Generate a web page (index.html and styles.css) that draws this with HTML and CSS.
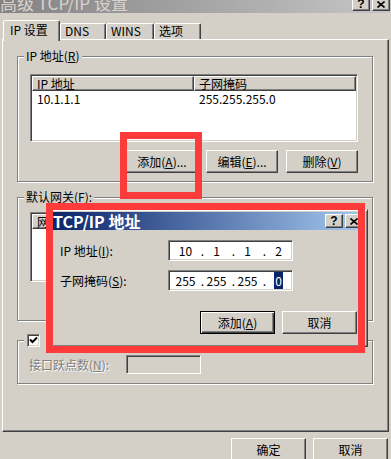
FILE: index.html
```html
<!DOCTYPE html>
<html lang="zh-CN">
<head>
    <meta charset="UTF-8">
    <meta name="viewport" content="width=device-width, initial-scale=1.0">
    <title>高级 TCP/IP 设置</title>
    <link rel="stylesheet" href="styles.css">
</head>
<body>
    <div class="window">
        <div class="titlebar">
            <span class="title">高级 TCP/IP 设置</span>
            <div class="caption-btns">
                <span class="cap-btn">?</span>
                <span class="cap-btn">
                    <svg width="8" height="7" viewBox="0 0 8 7"><path d="M0.5 0.5 L7.5 6.5 M7.5 0.5 L0.5 6.5" stroke="#000" stroke-width="1.6" fill="none"/></svg>
                </span>
            </div>
        </div>

        <div class="tabs">
            <div class="tab active">IP 设置</div>
            <div class="tab tab-dns">DNS</div>
            <div class="tab tab-wins">WINS</div>
            <div class="tab tab-opt">选项</div>
        </div>

        <div class="panel">
            <fieldset class="group group-ip">
                <legend>IP 地址(<u>R</u>)</legend>
                <div class="list list-ip">
                    <div class="list-head">
                        <span class="col col-1">IP 地址</span>
                        <span class="col col-2">子网掩码</span>
                    </div>
                    <div class="list-row">
                        <span class="col col-1">10.1.1.1</span>
                        <span class="col col-2">255.255.255.0</span>
                    </div>
                </div>
                <div class="btn-row">
                    <button class="btn">添加(<u>A</u>)...</button>
                    <button class="btn">编辑(<u>E</u>)...</button>
                    <button class="btn">删除(<u>V</u>)</button>
                </div>
            </fieldset>

            <fieldset class="group group-gw">
                <legend>默认网关(<u>F</u>):</legend>
                <div class="list list-gw">
                    <div class="list-head">
                        <span class="col col-1">网关</span>
                        <span class="col col-2">跃点数</span>
                    </div>
                </div>
                <div class="btn-row">
                    <button class="btn">添加(<u>D</u>)...</button>
                    <button class="btn">编辑(<u>T</u>)...</button>
                    <button class="btn">删除(<u>M</u>)</button>
                </div>
            </fieldset>

            <fieldset class="group group-metric">
                <legend>
                    <span class="checkbox">
                        <svg width="9" height="9" viewBox="0 0 9 9"><path d="M1 3.5 L3.5 6 L8 1.5" stroke="#000" stroke-width="2" fill="none"/></svg>
                    </span>
                    <span class="check-label">自动跃点计数(<u>U</u>)</span>
                </legend>
                <div class="metric-row">
                    <span class="disabled-label">接口跃点数(<u>N</u>):</span>
                    <span class="textbox disabled"></span>
                </div>
            </fieldset>
        </div>

        <div class="footer">
            <button class="btn">确定</button>
            <button class="btn">取消</button>
        </div>

        <!-- popup dialog on top -->
        <div class="dialog">
            <div class="dlg-title">
                <span class="dlg-caption">TCP/IP 地址</span>
                <div class="dlg-caption-btns">
                    <span class="cap-btn">?</span>
                    <span class="cap-btn">
                        <svg width="8" height="7" viewBox="0 0 8 7"><path d="M0.5 0.5 L7.5 6.5 M7.5 0.5 L0.5 6.5" stroke="#000" stroke-width="1.6" fill="none"/></svg>
                    </span>
                </div>
            </div>
            <div class="dlg-body">
                <div class="field-row">
                    <label>IP 地址(<u>I</u>):</label>
                    <div class="ipbox">
                        <span class="oct">10</span><span class="dot">.</span><span class="oct">1</span><span class="dot">.</span><span class="oct">1</span><span class="dot">.</span><span class="oct">2</span>
                    </div>
                </div>
                <div class="field-row">
                    <label>子网掩码(<u>S</u>):</label>
                    <div class="ipbox">
                        <span class="oct">255</span><span class="dot">.</span><span class="oct">255</span><span class="dot">.</span><span class="oct">255</span><span class="dot">.</span><span class="oct"><span class="sel">0</span></span>
                    </div>
                </div>
                <div class="dlg-btns">
                    <button class="btn default">添加(<u>A</u>)</button>
                    <button class="btn">取消</button>
                </div>
            </div>
        </div>

        <!-- red highlight marks -->
        <div class="mark mark-add"></div>
        <div class="mark mark-dialog"></div>
    </div>
</body>
</html>
```

FILE: styles.css
```css
* {
    box-sizing: border-box;
}

body {
    margin: 0;
    background-color: #d4d0c8;
    font-family: "Noto Sans CJK SC", "Noto Sans", sans-serif;
    font-size: 12px;
    color: #000;
}

.window {
    position: relative;
    width: 391px;
    height: 459px;
    overflow: hidden;
    background-color: #d4d0c8;
}

/* title bar (inactive) */
.titlebar {
    display: flex;
    justify-content: space-between;
    align-items: flex-start;
    height: 13px;
    overflow: hidden;
    background: linear-gradient(to right, #848284, #c6c6c6);
}

.title {
    margin-top: -6px;
    font-size: 17px;
    line-height: 17px;
    color: #d8d4cc;
    white-space: nowrap;
}

.caption-btns {
    display: flex;
    gap: 2px;
    margin: -3px 1px 0 0;
}

.cap-btn {
    display: flex;
    align-items: center;
    justify-content: center;
    width: 18px;
    height: 14px;
    background-color: #d4d0c8;
    border: 1px solid;
    border-color: #fff #404040 #404040 #fff;
    box-shadow: inset -1px -1px #808080;
    font: bold 12px "Liberation Sans", sans-serif;
    line-height: 12px;
}

/* tabs */
.tabs {
    position: relative;
    z-index: 1;
    display: flex;
    align-items: flex-end;
    height: 26px;
    padding-left: 3px;
}

.tab {
    height: 16px;
    padding-left: 4px;
    line-height: 14px;
    background-color: #d4d0c8;
    border: 1px solid;
    border-bottom: none;
    border-color: #fff #404040 transparent #fff;
    border-radius: 2px 2px 0 0;
    box-shadow: inset -1px 0 #808080;
    white-space: nowrap;
}

.tab.active {
    width: 57px;
    height: 21px;
    margin-bottom: -2px;
    padding-left: 6px;
    line-height: 18px;
}

.tab-dns { width: 46px; }
.tab-wins { width: 48px; }
.tab-opt { width: 47px; }

.panel {
    height: 393px;
    margin: 0 2px;
    padding-left: 14px;
    border: 1px solid;
    border-color: #fff #404040 #404040 #fff;
    box-shadow: inset -1px -1px #808080;
}

/* group boxes */
.group {
    width: 356px;
    min-width: 0;
    margin: 0;
    padding: 0 14px 0 6px;
    border: 1px solid #808080;
    box-shadow: inset 1px 1px #fff, 1px 1px #fff;
}

.group legend {
    padding: 0 2px;
    line-height: 14px;
    background-color: #d4d0c8;
    white-space: nowrap;
}

.group-ip {
    margin-top: 9px;
    padding-top: 11px;
    padding-bottom: 8px;
}

.group-gw {
    margin-top: 8px;
    padding-top: 8px;
    padding-bottom: 7px;
}

.group-metric {
    margin-top: 13px;
    padding-top: 8px;
    padding-bottom: 9px;
}

.group-metric legend {
    display: flex;
    align-items: center;
    height: 13px;
    padding: 0 0 0 3px;
}

.checkbox {
    display: flex;
    align-items: center;
    justify-content: center;
    width: 13px;
    height: 13px;
    background-color: #fff;
    border: 1px solid;
    border-color: #808080 #fff #fff #808080;
    box-shadow: inset 1px 1px #404040, inset -1px -1px #d4d0c8;
}

.check-label {
    margin-left: 8px;
}

/* list views */
.list {
    width: 328px;
    margin-left: 6px;
    padding: 1px;
    background-color: #fff;
    border: 1px solid;
    border-color: #808080 #fff #fff #808080;
    box-shadow: inset 1px 1px #404040, inset -1px -1px #d4d0c8;
}

.list-ip { height: 68px; }
.list-gw { height: 70px; }

.list-head {
    display: flex;
}

.list-head .col {
    height: 15px;
    padding-left: 4px;
    line-height: 13px;
    background-color: #d4d0c8;
    border: 1px solid;
    border-color: #fff #404040 #404040 #fff;
    box-shadow: inset -1px -1px #808080;
}

.col-1 { width: 162px; }
.col-2 { width: 162px; }

.list-row {
    display: flex;
    margin-top: 1px;
    line-height: 14px;
}

.list-row .col {
    padding-left: 5px;
}

/* buttons */
.btn-row {
    display: flex;
    justify-content: flex-end;
    gap: 8px;
    margin-top: 8px;
}

.btn {
    width: 72px;
    height: 23px;
    padding: 0;
    font: inherit;
    line-height: 14px;
    color: #000;
    background-color: #d4d0c8;
    border: 1px solid;
    border-color: #fff #404040 #404040 #fff;
    box-shadow: inset -1px -1px #808080;
}

.btn.default {
    border-color: #000;
    box-shadow: inset 1px 1px #fff, inset -1px -1px #404040, inset -2px -2px #808080;
}

.metric-row {
    display: flex;
    align-items: center;
}

.disabled-label {
    width: 97px;
    margin-left: 5px;
    color: #808080;
    text-shadow: 1px 1px #fff;
}

.textbox {
    display: block;
    width: 75px;
    height: 19px;
    border: 1px solid;
    border-color: #808080 #fff #fff #808080;
    box-shadow: inset 1px 1px #404040, inset -1px -1px #d4d0c8;
}

.textbox.disabled {
    background-color: #d4d0c8;
}

.footer {
    display: flex;
    justify-content: flex-end;
    gap: 7px;
    margin-top: 6px;
    padding-right: 3px;
}

.footer .btn {
    width: 75px;
}

/* popup dialog */
.dialog {
    position: absolute;
    left: 49px;
    top: 209px;
    width: 319px;
    height: 138px;
    padding: 2px;
    background-color: #d4d0c8;
    border: 1px solid;
    border-color: #d4d0c8 #404040 #404040 #d4d0c8;
    box-shadow: inset 1px 1px #fff, inset -1px -1px #808080;
}

.dlg-title {
    display: flex;
    justify-content: space-between;
    align-items: center;
    height: 18px;
    padding-left: 1px;
    background: linear-gradient(to right, #0a246a, #a6caf0);
}

.dlg-caption {
    font-size: 16px;
    font-weight: bold;
    line-height: 18px;
    color: #fff;
    white-space: nowrap;
}

.dlg-caption-btns {
    display: flex;
    gap: 2px;
    margin-right: 2px;
}

.dlg-body {
    display: flex;
    flex-direction: column;
    gap: 9px;
    padding: 10px 8px 0 8px;
}

.field-row {
    display: flex;
    align-items: center;
    height: 21px;
}

.field-row label {
    width: 108px;
}

.ipbox {
    display: flex;
    align-items: center;
    width: 125px;
    height: 21px;
    padding-left: 4px;
    background-color: #fff;
    border: 1px solid;
    border-color: #808080 #fff #fff #808080;
    box-shadow: inset 1px 1px #404040, inset -1px -1px #d4d0c8;
}

.oct {
    width: 25px;
    text-align: center;
    line-height: 14px;
}

.dot {
    width: 6px;
    text-align: right;
    line-height: 14px;
}

.sel {
    padding: 0 1px;
    color: #fff;
    background-color: #0a246a;
}

.dlg-btns {
    display: flex;
    justify-content: flex-end;
    gap: 7px;
    margin-top: 11px;
}

.dlg-btns .btn {
    width: 75px;
}

/* red highlight frames */
.mark {
    position: absolute;
    border: 7px solid #fd3b3b;
    pointer-events: none;
}

.mark-add {
    left: 120px;
    top: 132px;
    width: 82px;
    height: 67px;
}

.mark-dialog {
    left: 46px;
    top: 203px;
    width: 319px;
    height: 150px;
}
```
